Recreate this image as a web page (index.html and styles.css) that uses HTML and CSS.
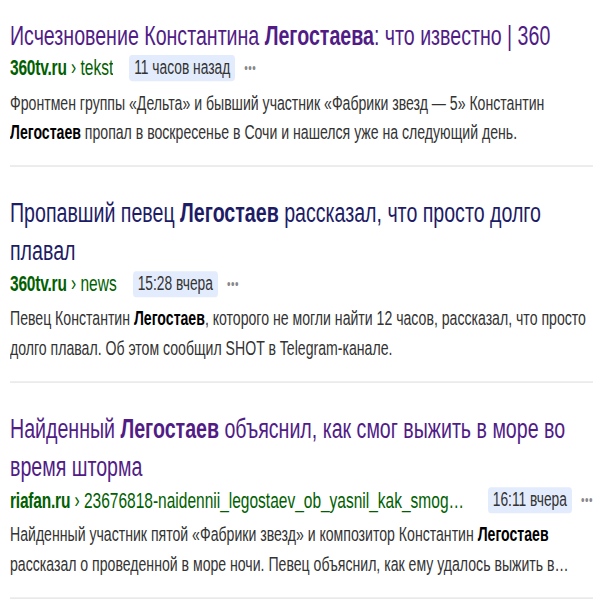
FILE: index.html
```html
<!DOCTYPE html>
<html lang="ru">
<head>
  <meta charset="UTF-8" />
  <meta name="viewport" content="width=device-width, initial-scale=1.0"/>
  <title>Легостаев — результаты поиска</title>
  <link rel="stylesheet" href="styles.css">
</head>
<body>

<div class="page">
<div class="serp">
  <div class="result">
    <h2 class="title visited">Исчезновение Константина <b>Легостаева</b>: что известно | 360</h2>
    <div class="path">
      <span class="url"><b>360tv.ru</b> › tekst</span>
      <span class="date">11 часов назад</span>
      <span class="more">•••</span>
    </div>
    <p class="snippet">Фронтмен группы «Дельта» и бывший участник «Фабрики звезд — 5» Константин <b>Легостаев</b> пропал в воскресенье в Сочи и нашелся уже на следующий день.</p>
  </div>

  <div class="result">
    <h2 class="title">Пропавший певец <b>Легостаев</b> рассказал, что просто долго плавал</h2>
    <div class="path">
      <span class="url"><b>360tv.ru</b> › news</span>
      <span class="date">15:28 вчера</span>
      <span class="more">•••</span>
    </div>
    <p class="snippet">Певец Константин <b>Легостаев</b>, которого не могли найти 12 часов, рассказал, что просто долго плавал. Об этом сообщил SHOT в Telegram-канале.</p>
  </div>

  <div class="result">
    <h2 class="title visited">Найденный <b>Легостаев</b> объяснил, как смог выжить в море во время шторма</h2>
    <div class="path">
      <span class="url"><b>riafan.ru</b> › 23676818-naidennii_legostaev_ob_yasnil_kak_smog_vizhit_v_more_vo_vremya_shtorma</span>
      <span class="date">16:11 вчера</span>
      <span class="more">•••</span>
    </div>
    <p class="snippet">Найденный участник пятой «Фабрики звезд» и композитор Константин <b>Легостаев</b> рассказал о проведенной в море ночи. Певец объяснил, как ему удалось выжить в открытом море во время сильного шторма.</p>
  </div>
</div>
</div>

</body>
</html>
```

FILE: styles.css
```css
body {
  margin: 0;
  background: #fff;
  font-family: "Liberation Sans", Arial, sans-serif;
}
.page {
  height: 600px;
  overflow: hidden;
}
.serp {
  padding: 10.6px 7px 0 10px;
  transform: scaleY(1.45);
  transform-origin: 0 0;
}
.result {
  padding-bottom: 12.6px;
  margin-bottom: 18px;
  border-bottom: 1px solid #e6e6e6;
}
.title {
  margin: 0;
  font-size: 19.6px;
  line-height: 26px;
  font-weight: normal;
  color: #1d1c66;
}
.title.visited {
  color: #511c86;
}
.path {
  display: flex;
  align-items: center;
  height: 18px;
  margin-top: 1.5px;
  font-size: 15.5px;
  line-height: 18px;
  color: #006000;
  white-space: nowrap;
}
.url {
  min-width: 0;
  overflow: hidden;
  text-overflow: ellipsis;
}
.url b {
  letter-spacing: -0.2px;
}
.date {
  flex: none;
  margin-left: 16px;
  padding: 0 5px;
  font-size: 13.8px;
  background: #e3ecfc;
  border-radius: 3px;
  color: #333;
}
.more {
  flex: none;
  margin-left: 9px;
  font-size: 10px;
  letter-spacing: 0.5px;
  color: #888;
}
.snippet {
  margin: 4.5px 0 0;
  font-size: 14.1px;
  line-height: 20.6px;
  color: #333;
  display: -webkit-box;
  -webkit-line-clamp: 2;
  -webkit-box-orient: vertical;
  overflow: hidden;
}
.snippet b {
  color: #000;
}
```
